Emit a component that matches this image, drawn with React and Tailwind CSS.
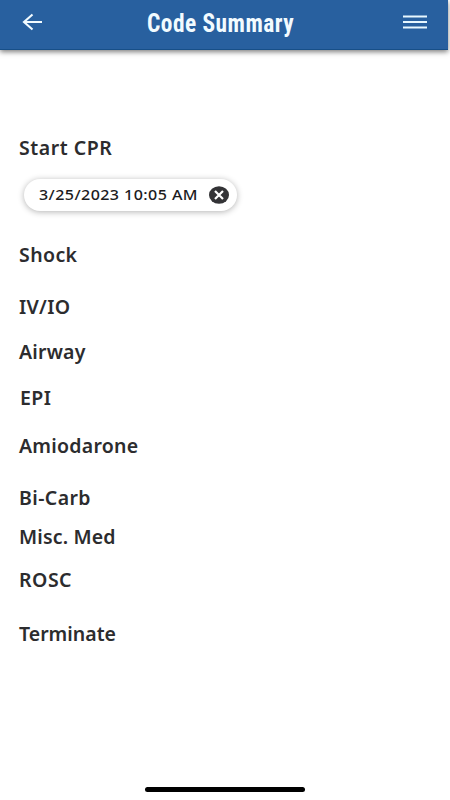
import React from "react";

const App = () => {
  const events = [
    { name: "Shock", className: "mt-8 tracking-[0.4px]" },
    { name: "IV/IO", className: "mt-7 tracking-[0.3px]" },
    { name: "Airway", className: "mt-[21px] tracking-[0.2px]" },
    { name: "EPI", className: "mt-[22px] ml-px tracking-[0.4px]" },
    { name: "Amiodarone", className: "mt-6 tracking-[0.25px]" },
    { name: "Bi-Carb", className: "mt-7 tracking-[0.4px]" },
    { name: "Misc. Med", className: "mt-[15px] tracking-[0.15px]" },
    { name: "ROSC", className: "mt-[19px] tracking-[0.5px]" },
    { name: "Terminate", className: "mt-[30px]" }
  ];

  return (
    <div className="flex flex-col w-[450px] h-[800px] overflow-hidden bg-white font-['Noto_Sans',sans-serif] text-[#2c2c2e]">
      {/* Header */}
      <header className="flex items-center justify-between w-[448px] h-[50px] shrink-0 pl-[22px] pr-[21px] bg-[#28609f] border-b border-[#174f88] shadow-[0_2px_5px_rgba(0,0,0,0.5)]">
        <svg width="22" height="18" viewBox="0 0 22 18" fill="none" stroke="#f2fbff" strokeWidth="2.100" className="-mt-1.5">
          <path d="M20 9H2M10.500 1.500L2 9l8.500 7.500" />
        </svg>
        <h1 className="text-[25px] leading-8 font-bold tracking-[0.5px] whitespace-nowrap text-[#f2fbff] font-['Roboto',sans-serif] [font-stretch:75%] scale-x-[0.937] -mt-[2px] mr-[5px]">
          Code Summary
        </h1>
        <svg width="24" height="14" viewBox="0 0 24 14" stroke="#e8f8ff" strokeWidth="2" className="-mt-1.5">
          <path d="M0 1.500h24M0 7h24M0 12.500h24" />
        </svg>
      </header>

      {/* Events */}
      <main className="flex flex-col items-start grow pl-[19px] pt-[86px]">
        <h2 className="h-6 leading-6 text-[19.500px] font-semibold tracking-[0.55px]">Start CPR</h2>
        <div className="flex items-center justify-between w-[213px] h-8 mt-[18.500px] mb-[0.500px] ml-[5px] pl-[15px] pr-2 rounded-full bg-white shadow-[0_1px_6px_rgba(0,0,0,0.3)]">
          <span className="origin-left scale-x-[1.07] text-[15px] font-medium tracking-[0.4px] whitespace-nowrap text-[#1c1c1e]">
            3/25/2023 10:05 AM
          </span>
          <svg width="20" height="18" viewBox="0 0 20 18">
            <ellipse cx="10" cy="9" rx="10" ry="8.800" fill="#333336" />
            <path d="M6 5l8 8M14 5l-8 8" stroke="#fff" strokeWidth="2.200" />
          </svg>
        </div>
        {events.map((event) => (
          <h2 key={event.name} className={`h-6 leading-6 text-[19.500px] font-semibold ${event.className}`}>
            {event.name}
          </h2>
        ))}
      </main>

      {/* Home indicator */}
      <div className="w-40 h-[5px] mb-[8px] ml-[145px] shrink-0 rounded-full bg-black" />
    </div>
  );
};

export default App;
